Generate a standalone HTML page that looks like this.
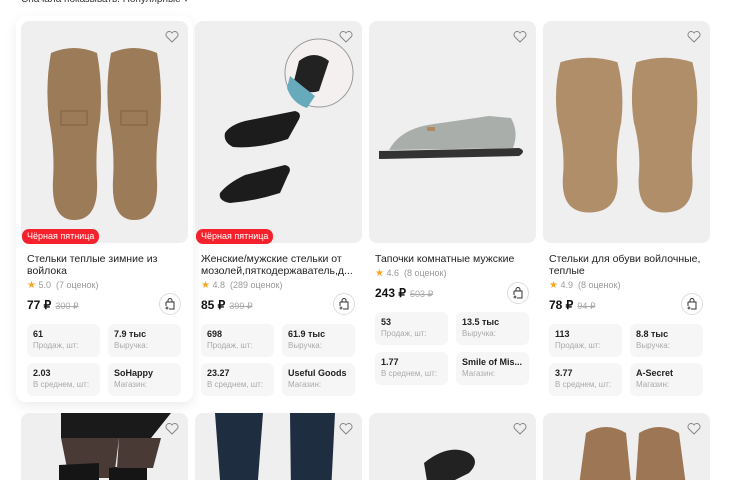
<!DOCTYPE html>
<html><head><meta charset="utf-8"><style>
*{margin:0;padding:0;box-sizing:border-box}
html,body{width:738px;height:480px;overflow:hidden}
body{background:#fff;font-family:"Liberation Sans",Arial,sans-serif;color:#222;position:relative}
.a{position:absolute}
.img{position:absolute;top:21px;width:167px;height:222px;background:#efefef;border-radius:8px;overflow:hidden}
.img2{position:absolute;top:413px;width:167px;height:80px;background:#efefef;border-radius:8px;overflow:hidden}
.badge{position:absolute;top:229px;background:#f5222d;color:#fff;font-size:9px;padding:2px 5px;border-radius:7px;line-height:11px}
.t{position:absolute;font-size:10.5px;line-height:12px;width:160px}
.r{position:absolute;font-size:9px;color:#999}
.r b{color:#f5a623;font-weight:normal;font-size:10px}
.p{position:absolute;font-size:12px;font-weight:bold;color:#111}
.p s{font-weight:normal;color:#aaa;font-size:9px;margin-left:4px}
.bag{position:absolute;width:22px;height:22px;border:1px solid #ddd;border-radius:50%;background:#fff}
.st{position:absolute;width:73px;height:33px;background:#f6f6f6;border-radius:6px;padding:5px 0 0 6px}
.st b{display:block;font-size:9px;color:#222;line-height:11px}
.st span{display:block;font-size:8px;color:#aaa;line-height:12px}
</style></head><body>
<div class="a" style="left:21px;top:-6px;font-size:10px;color:#333">Сначала показывать: Популярные &#9662;</div>
<div class="a" style="left:16px;top:16px;width:177px;height:386px;border-radius:10px;box-shadow:0 4px 12px rgba(0,0,0,0.08)"></div>

<div class="img" style="left:21px"><svg width="167" height="222"><g fill="#9c7b58"><path transform="translate(24,24)" d="M6 8 Q29 -2 52 8 Q58 40 55 75 Q50 105 52 135 Q54 175 29 175 Q6 175 8 135 Q10 105 4 75 Q0 40 6 8Z"/><path transform="translate(84,24)" d="M6 8 Q29 -2 52 8 Q58 40 55 75 Q50 105 52 135 Q54 175 29 175 Q6 175 8 135 Q10 105 4 75 Q0 40 6 8Z"/></g><g fill="none" stroke="#7a5c3e" stroke-width="0.8"><rect x="40" y="90" width="26" height="14"/><rect x="100" y="90" width="26" height="14"/></g></svg></div>
<div class="img" style="left:195px"><svg width="167" height="222"><circle cx="124" cy="52" r="34" fill="#f4f0ef" stroke="#999"/><path d="M104 40 q15-12 30 0 l-10 30 q-15 5 -25 -10z" fill="#222"/><path d="M95 55 q12 10 25 20 l-8 12 q-15-5 -20-20z" fill="#6ab"/><path d="M30 112 q5-8 20-12 l50 -10 q8 2 3 10 l-10 18 q-30 10 -55 8 q-10-5 -8-14z" fill="#1c1c1c"/><path d="M25 172 q8-10 25-18 l40 -10 q8 2 3 10 l-8 18 q-25 8 -50 10 q-12-2 -10-10z" fill="#1c1c1c"/></svg></div>
<div class="img" style="left:369px"><svg width="167" height="222"><path d="M10 130 l140 -3 q8 3 0 8 l-140 3z" fill="#333"/><path d="M20 129 q12-22 45-26 q35-5 55-8 l22 2 q8 14 2 30 l-124 2z" fill="#a9aeaa"/><rect x="58" y="106" width="8" height="4" fill="#b08a5a"/></svg></div>
<div class="img" style="left:543px"><svg width="167" height="222"><g fill="#b08e6a"><path transform="translate(10,34) scale(1.24,0.9)" d="M6 8 Q29 -2 52 8 Q58 40 55 75 Q50 105 52 135 Q54 175 29 175 Q6 175 8 135 Q10 105 4 75 Q0 40 6 8Z"/><path transform="translate(86,34) scale(1.22,0.9)" d="M6 8 Q29 -2 52 8 Q58 40 55 75 Q50 105 52 135 Q54 175 29 175 Q6 175 8 135 Q10 105 4 75 Q0 40 6 8Z"/></g></svg></div>

<div class="img2" style="left:21px"><svg width="167" height="80"><path d="M40 0 l110 0 l-20 25 l-90 0z" fill="#1a1a1a"/><path d="M40 25 l58 0 l-5 40 l-45 0z" fill="#4a3a36"/><path d="M38 52 l40 -2 l0 30 l-40 0z M88 55 l38 -5 l0 30 l-38 0z" fill="#151515"/><path d="M98 25 l42 0 l-8 30 l-36 0z" fill="#4a3a36"/></svg></div>
<div class="img2" style="left:195px"><svg width="167" height="80"><path d="M20 0 l48 0 l-6 80 l-36 0z M95 0 l45 0 l-4 80 l-40 0z" fill="#1e2d40"/></svg></div>
<div class="img2" style="left:369px"><svg width="167" height="80"><path d="M55 50 q25-20 45-10 q12 8 0 20 l-40 20z" fill="#222"/></svg></div>
<div class="img2" style="left:543px"><svg width="167" height="80"><g fill="#9c7655"><path d="M35 80 l8-60 q20-12 40 0 l6 60z"/><path d="M92 80 l4-60 q20-12 40 0 l8 60z"/></g></svg></div>

<svg class="a" width="14" height="12" style="left:165px;top:31px" viewBox="0 0 14 12"><path d="M7 11 L1.5 5.5 A3 3 0 0 1 7 2 A3 3 0 0 1 12.5 5.5Z" fill="none" stroke="#888"/></svg>
<svg class="a" width="14" height="12" style="left:339px;top:31px" viewBox="0 0 14 12"><path d="M7 11 L1.5 5.5 A3 3 0 0 1 7 2 A3 3 0 0 1 12.5 5.5Z" fill="none" stroke="#888"/></svg>
<svg class="a" width="14" height="12" style="left:513px;top:31px" viewBox="0 0 14 12"><path d="M7 11 L1.5 5.5 A3 3 0 0 1 7 2 A3 3 0 0 1 12.5 5.5Z" fill="none" stroke="#888"/></svg>
<svg class="a" width="14" height="12" style="left:687px;top:31px" viewBox="0 0 14 12"><path d="M7 11 L1.5 5.5 A3 3 0 0 1 7 2 A3 3 0 0 1 12.5 5.5Z" fill="none" stroke="#888"/></svg>
<svg class="a" width="14" height="12" style="left:165px;top:423px" viewBox="0 0 14 12"><path d="M7 11 L1.5 5.5 A3 3 0 0 1 7 2 A3 3 0 0 1 12.5 5.5Z" fill="none" stroke="#888"/></svg>
<svg class="a" width="14" height="12" style="left:339px;top:423px" viewBox="0 0 14 12"><path d="M7 11 L1.5 5.5 A3 3 0 0 1 7 2 A3 3 0 0 1 12.5 5.5Z" fill="none" stroke="#888"/></svg>
<svg class="a" width="14" height="12" style="left:513px;top:423px" viewBox="0 0 14 12"><path d="M7 11 L1.5 5.5 A3 3 0 0 1 7 2 A3 3 0 0 1 12.5 5.5Z" fill="none" stroke="#888"/></svg>
<svg class="a" width="14" height="12" style="left:687px;top:423px" viewBox="0 0 14 12"><path d="M7 11 L1.5 5.5 A3 3 0 0 1 7 2 A3 3 0 0 1 12.5 5.5Z" fill="none" stroke="#888"/></svg>

<div class="badge" style="left:22px">Чёрная пятница</div>
<div class="badge" style="left:196px">Чёрная пятница</div>

<div class="t" style="left:27px;top:253px;width:150px">Стельки теплые зимние из войлока</div>
<div class="r" style="left:27px;top:280px"><b>★</b> 5.0 &nbsp;(7 оценок)</div>
<div class="p" style="left:27px;top:298px">77 ₽<s>300 ₽</s></div>
<div class="st" style="left:27px;top:324px"><b>61</b><span>Продаж, шт:</span></div>
<div class="st" style="left:108px;top:324px"><b>7.9 тыс</b><span>Выручка:</span></div>
<div class="st" style="left:27px;top:363px"><b>2.03</b><span>В среднем, шт:</span></div>
<div class="st" style="left:108px;top:363px"><b>SoHappy</b><span>Магазин:</span></div>

<div class="t" style="left:201px;top:253px;width:156px;white-space:nowrap;overflow:hidden">Женские/мужские стельки от<br>мозолей,пяткодержаватель,д...</div>
<div class="r" style="left:201px;top:280px"><b>★</b> 4.8 &nbsp;(289 оценок)</div>
<div class="p" style="left:201px;top:298px">85 ₽<s>399 ₽</s></div>
<div class="st" style="left:201px;top:324px"><b>698</b><span>Продаж, шт:</span></div>
<div class="st" style="left:282px;top:324px"><b>61.9 тыс</b><span>Выручка:</span></div>
<div class="st" style="left:201px;top:363px"><b>23.27</b><span>В среднем, шт:</span></div>
<div class="st" style="left:282px;top:363px"><b>Useful Goods</b><span>Магазин:</span></div>

<div class="t" style="left:375px;top:253px">Тапочки комнатные мужские</div>
<div class="r" style="left:375px;top:268px"><b>★</b> 4.6 &nbsp;(8 оценок)</div>
<div class="p" style="left:375px;top:286px">243 ₽<s>503 ₽</s></div>
<div class="st" style="left:375px;top:312px"><b>53</b><span>Продаж, шт:</span></div>
<div class="st" style="left:456px;top:312px"><b>13.5 тыс</b><span>Выручка:</span></div>
<div class="st" style="left:375px;top:352px"><b>1.77</b><span>В среднем, шт:</span></div>
<div class="st" style="left:456px;top:352px"><b>Smile of Mis...</b><span>Магазин:</span></div>

<div class="t" style="left:549px;top:253px;width:165px">Стельки для обуви войлочные,<br>теплые</div>
<div class="r" style="left:549px;top:280px"><b>★</b> 4.9 &nbsp;(8 оценок)</div>
<div class="p" style="left:549px;top:298px">78 ₽<s>94 ₽</s></div>
<div class="st" style="left:549px;top:324px"><b>113</b><span>Продаж, шт:</span></div>
<div class="st" style="left:630px;top:324px"><b>8.8 тыс</b><span>Выручка:</span></div>
<div class="st" style="left:549px;top:363px"><b>3.77</b><span>В среднем, шт:</span></div>
<div class="st" style="left:630px;top:363px"><b>A-Secret</b><span>Магазин:</span></div>

<div class="bag" style="left:159px;top:293px"></div>
<div class="bag" style="left:333px;top:293px"></div>
<div class="bag" style="left:507px;top:282px"></div>
<div class="bag" style="left:681px;top:293px"></div>
<svg class="a" width="10" height="12" style="left:165px;top:298px"><path d="M1 4 h8 v7 h-5 M1 4 v4 M3 4 v-1.5 a2 2 0 0 1 4 0 v1.5 M0.5 10 h3 M2 8.5 v3" fill="none" stroke="#333" stroke-width="1"/></svg>
<svg class="a" width="10" height="12" style="left:339px;top:298px"><path d="M1 4 h8 v7 h-5 M1 4 v4 M3 4 v-1.5 a2 2 0 0 1 4 0 v1.5 M0.5 10 h3 M2 8.5 v3" fill="none" stroke="#333" stroke-width="1"/></svg>
<svg class="a" width="10" height="12" style="left:513px;top:287px"><path d="M1 4 h8 v7 h-5 M1 4 v4 M3 4 v-1.5 a2 2 0 0 1 4 0 v1.5 M0.5 10 h3 M2 8.5 v3" fill="none" stroke="#333" stroke-width="1"/></svg>
<svg class="a" width="10" height="12" style="left:687px;top:298px"><path d="M1 4 h8 v7 h-5 M1 4 v4 M3 4 v-1.5 a2 2 0 0 1 4 0 v1.5 M0.5 10 h3 M2 8.5 v3" fill="none" stroke="#333" stroke-width="1"/></svg>
</body></html>
